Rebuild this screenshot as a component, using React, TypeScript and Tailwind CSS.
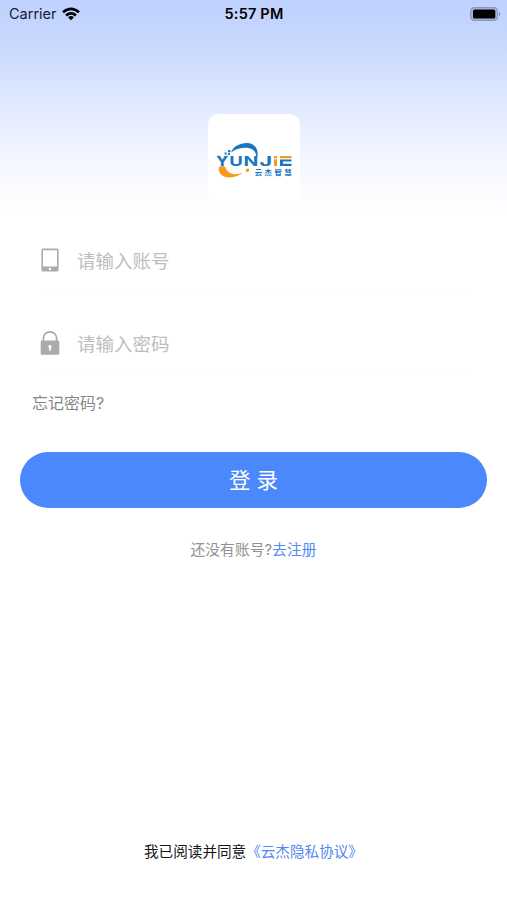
import React from 'react';

function Logo() {
  return (
    <svg
      viewBox="0 0 92 92"
      className="block size-[92px] font-['Inter','Noto_Sans_CJK_SC',sans-serif]"
      role="img"
      aria-label="YUNJIE 云杰智慧"
    >
      <path d="M23 38.5C25 32 33 28.5 40 29C47 29.8 50.5 35 49.5 43L48.3 43C48.3 37 44 33.5 37 33.7C31 33.9 27 35.5 23 38.5Z" fill="#1877bd" />
      <path d="M20 36h2.4v2.3H20zM16.6 38.4h2v2h-2zM20 39h2v2h-2z" fill="#1877bd" />
      <path d="M11 52.5C9.5 59 14 63.5 22 63.5C27 63.2 31.5 61.5 35 58.8C28 61.2 20 61.4 17 52.5Z" fill="#f79a18" />
      <path d="M38 54.8h3v3h-3z" fill="#f79a18" />
      <g fill="#1877bd" fontWeight="700" fontSize="13.6">
        <text x="8.6" y="52" textLength="11.4" lengthAdjust="spacingAndGlyphs" stroke="#1877bd" strokeWidth=".4">Y</text>
        <text x="21.3" y="52" textLength="13.6" lengthAdjust="spacingAndGlyphs">U</text>
        <text x="35.4" y="52" textLength="14.8" lengthAdjust="spacingAndGlyphs">N</text>
        <text x="51.6" y="52" textLength="12.6" lengthAdjust="spacingAndGlyphs">J</text>
      </g>
      <path d="M66 42h3v2.2h-3zM66 45.2h3V52h-3zM72 42h11.5v2.2H72z" fill="#f79a18" />
      <path d="M72 45.4h11.5v2.2H75v2.2h8.5V52H72z" fill="#1877bd" />
      <text x="46.8" y="60.8" fill="#1877bd" fontWeight="700" fontSize="7.4" textLength="36.8" lengthAdjust="spacing">云杰智慧</text>
    </svg>
  );
}

function StatusBar() {
  return (
    <div className="grid h-7 grid-cols-3 items-center pl-[9px] pr-[6px] text-[14.5px] leading-7 text-[#18202d]">
      <div className="flex items-center gap-[5px]">
        <span>Carrier</span>
        <svg viewBox="0 0 18 14" className="-mt-px h-[14px] w-[18px]" fill="none" stroke="#000" strokeWidth="2.6">
          <path d="M1 5.2Q9-1.6 17 5.2M4 8.5Q9 4.3 14 8.5" />
          <path d="M6 10.2Q9 8 12 10.2L9 13.3Z" fill="#000" stroke="none" />
        </svg>
      </div>
      <span className="-ml-[2px] text-center font-semibold tracking-[0.2px] text-black">5:57 PM</span>
      <svg viewBox="0 0 31 14" className="-mt-px h-[14px] w-[31px] justify-self-end">
        <rect x=".7" y=".7" width="26.8" height="12.6" rx="3.6" fill="#a9b7da" stroke="#8996b7" strokeWidth="1.2" />
        <rect x="3" y="2.5" width="22.3" height="9" rx="1.6" fill="#000" />
        <path d="M29 4.7q3 2.3 0 4.6z" fill="#8996b7" />
      </svg>
    </div>
  );
}

function PhoneIcon() {
  return (
    <svg viewBox="0 0 20 24" className="h-6 w-5">
      <path fillRule="evenodd" fill="#ababab" d="M3 .5h14q1.6 0 1.6 1.6v19.8q0 1.6-1.6 1.6H3q-1.6 0-1.6-1.6V2.1Q1.4.5 3 .5ZM3 2.3v16.2h14V2.3ZM10 19.7a1.3 1.3 0 1 0 0 2.6a1.3 1.3 0 1 0 0-2.6Z" />
    </svg>
  );
}

function LockIcon() {
  return (
    <svg viewBox="0 0 20 24" className="h-6 w-5">
      <path d="M3.4 11V7.2a6.6 6.4 0 0 1 13.2 0V11" fill="none" stroke="#ababab" strokeWidth="1.7" />
      <rect x=".7" y="9.6" width="18.6" height="14.2" rx="1" fill="#ababab" />
      <path d="M10 14a1.8 1.8 0 0 1 1 3.2L10.6 20H9.4L9 17.2A1.8 1.8 0 0 1 10 14Z" fill="#fff" />
    </svg>
  );
}

function Field({ icon, label, type }: { icon: React.ReactNode; label: string; type: string }) {
  return (
    <label className="ml-[40px] mr-[36px] flex h-[61px] items-center gap-[17px] border-b border-[#fafafa]">
      {icon}
      <input
        type={type}
        placeholder={label}
        className="min-w-0 flex-1 bg-transparent pt-px text-[18.5px] leading-7 outline-none placeholder:text-[#bdbdbd]"
      />
    </label>
  );
}

export default function App() {
  return (
    <main className="flex h-[900px] w-full flex-col bg-white font-['Inter','Noto_Sans_CJK_SC',sans-serif]">
      <header className="h-[230px] shrink-0 bg-[linear-gradient(180deg,#bfd1ff_0px,#c4d5ff_28px,#d2e0ff_70px,#e4ebff_115px,#f3f6ff_155px,#ffffff_212px)]">
        <StatusBar />
        <div className="mx-auto mt-[86px] size-[92px] rounded-[10px] bg-white">
          <Logo />
        </div>
      </header>
      <Field icon={<PhoneIcon />} label="请输入账号" type="text" />
      <div className="h-[22px]" />
      <Field icon={<LockIcon />} label="请输入密码" type="password" />
      <a className="ml-8 mt-[17px] self-start text-[16px] leading-6 text-[#858789]">忘记密码?</a>
      <button className="mx-5 mt-[37px] h-[56px] shrink-0 rounded-full bg-[#4b88fc] text-[21.5px] leading-[56px] text-white">
        登 录
      </button>
      <p className="mt-[30px] text-center text-[14.8px] leading-6 text-[#929292]">
        还没有账号?<a className="text-[#5189ef]">去注册</a>
      </p>
      <p className="mb-[36px] mt-auto pl-[144px] text-[14.6px] leading-6 text-[#151515]">
        我已阅读并同意<a className="text-[#5189ef]">《云杰隐私协议》</a>
      </p>
    </main>
  );
}
